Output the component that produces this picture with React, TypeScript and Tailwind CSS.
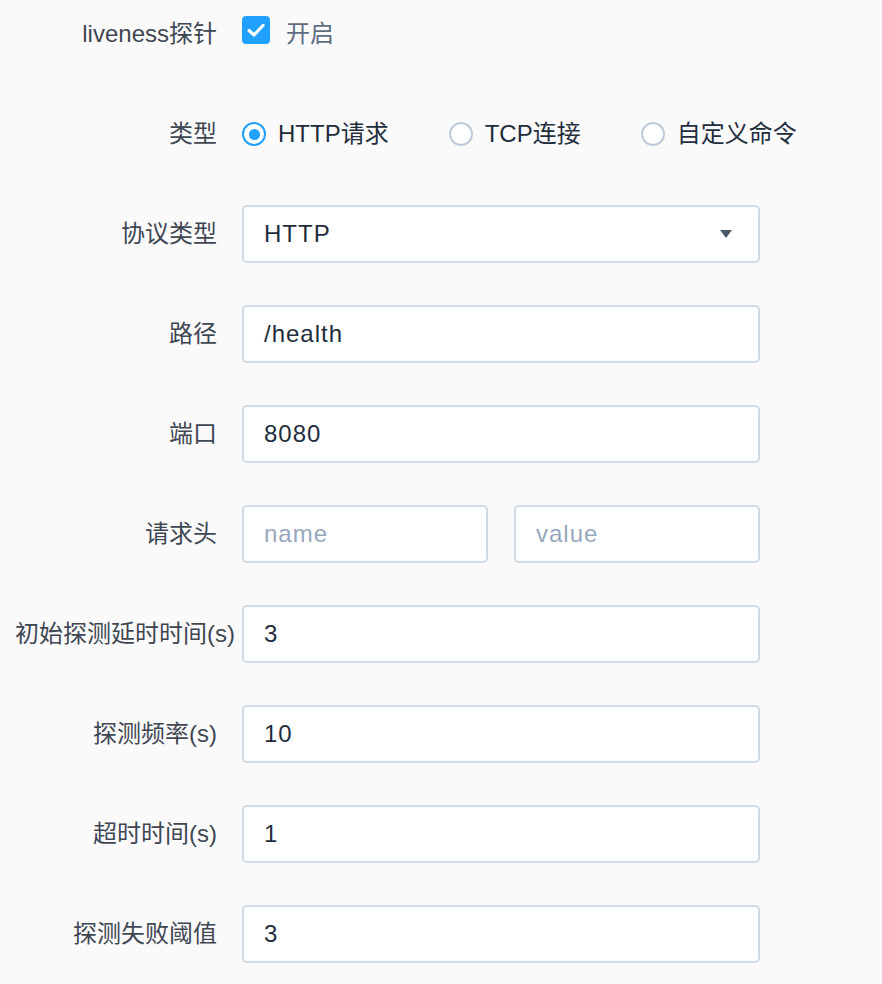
const font = { fontFamily: '"Liberation Sans", "Noto Sans CJK SC", sans-serif' };

function Row({ label, children, labelPad = "pr-[25px]" }: { label: string; children: React.ReactNode; labelPad?: string }) {
  return (
    <div className="flex items-center h-[58px] mb-[42px]">
      <div className={`w-[242px] shrink-0 flex justify-end whitespace-nowrap text-[24px] text-[#3f4753] ${labelPad}`}>
        {label}
      </div>
      <div className="flex items-center">{children}</div>
    </div>
  );
}

function TextInput({ value, placeholder, w = "w-[518px]" }: { value?: string; placeholder?: string; w?: string }) {
  return (
    <div
      className={`${w} h-[58px] bg-white border-2 border-[#d1dbe5] rounded-[5px] flex items-center px-[20px] text-[24px] tracking-[1px] ${
        value ? "text-[#1f2d3d]" : "text-[#97a8be]"
      }`}
    >
      {value ?? placeholder}
    </div>
  );
}

function Radio({ label, checked }: { label: string; checked?: boolean }) {
  return (
    <div className="flex items-center gap-[12px] mr-[60px]">
      <div
        className={`w-[24px] h-[24px] rounded-full border-2 bg-white flex items-center justify-center ${
          checked ? "border-[#20a0ff]" : "border-[#bfcbd9]"
        }`}
      >
        {checked && <div className="w-[11px] h-[11px] rounded-full bg-[#20a0ff]" />}
      </div>
      <span className="text-[24px] text-[#1f2d3d]">{label}</span>
    </div>
  );
}

export default function App() {
  return (
    <div className="w-[882px] h-[984px] bg-[#fafafa] pt-[5px]" style={font}>
      <Row label="liveness探针">
        <div className="flex items-center gap-[16px]">
          <div className="w-[28px] h-[28px] rounded-[4px] bg-[#20a0ff] flex items-center justify-center -mt-[8px]">
            <svg width="18" height="14" viewBox="0 0 18 14">
              <path d="M2 7.5 L7 12 L16 2.5" stroke="white" strokeWidth="3.2" fill="none" strokeLinecap="round" strokeLinejoin="round" />
            </svg>
          </div>
          <span className="text-[24px] text-[#5e6d82]">开启</span>
        </div>
      </Row>
      <Row label="类型">
        <Radio label="HTTP请求" checked />
        <Radio label="TCP连接" />
        <Radio label="自定义命令" />
      </Row>
      <Row label="协议类型">
        <div className="w-[518px] h-[58px] bg-white border-2 border-[#d1dbe5] rounded-[5px] flex items-center justify-between pl-[20px] pr-[26px] text-[24px] tracking-[1px] text-[#1f2d3d]">
          <span>HTTP</span>
          <svg width="12" height="8" viewBox="0 0 12 8">
            <path d="M0 0 H12 L6 8 Z" fill="#48576a" />
          </svg>
        </div>
      </Row>
      <Row label="路径">
        <TextInput value="/health" />
      </Row>
      <Row label="端口">
        <TextInput value="8080" />
      </Row>
      <Row label="请求头">
        <div className="flex gap-[26px]">
          <TextInput placeholder="name" w="w-[246px]" />
          <TextInput placeholder="value" w="w-[246px]" />
        </div>
      </Row>
      <Row label="初始探测延时时间(s)" labelPad="pr-[7px]">
        <TextInput value="3" />
      </Row>
      <Row label="探测频率(s)">
        <TextInput value="10" />
      </Row>
      <Row label="超时时间(s)">
        <TextInput value="1" />
      </Row>
      <Row label="探测失败阈值">
        <TextInput value="3" />
      </Row>
    </div>
  );
}
